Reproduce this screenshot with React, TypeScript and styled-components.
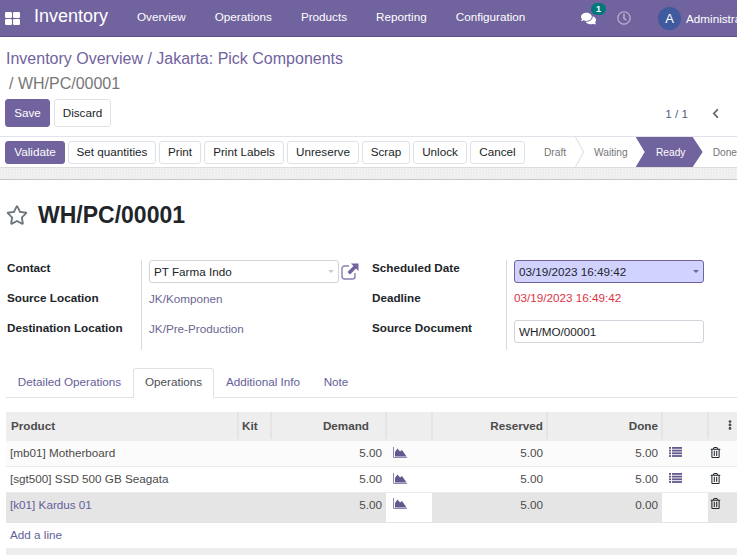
import React from "react";
import styled, { createGlobalStyle } from "styled-components";
import { FaComments, FaRegClock, FaChevronLeft, FaRegStar, FaRegTrashAlt, FaEllipsisV } from "react-icons/fa";

const Global = createGlobalStyle`
  html, body { margin: 0; padding: 0; background: #fff; overflow: hidden; }
  body { width: 737px; height: 559px; font-family: "Liberation Sans", Arial, sans-serif; font-size: 11.7px; color: #4c4c4c; }
  * { box-sizing: border-box; }
`;
const Page = styled.div`width: 737px; height: 559px; overflow: hidden; display: flex; flex-direction: column;`;
const Navbar = styled.header`
  height: 37px; flex: none; background: #71639e; border-bottom: 1px solid #5d4f8a; color: #fff;
  display: flex; align-items: center; padding-left: 5px; white-space: nowrap;
  & svg { flex: none; }
`;
const Brand = styled.span`font-size: 18px; margin-left: 14px; margin-right: 29px; width: 74px; flex: none; padding-bottom: 3px;`;
const Menu = styled.nav`display: flex; gap: 29px; flex: none; width: 387px; padding-bottom: 3px;`;
const Tray = styled.div`display: flex; align-items: center; margin-left: 57px; flex: none;`;
const ChatWrap = styled.span`position: relative; display: flex; width: 36px;`;
const Badge = styled.span`
  position: absolute; left: 10px; top: -8px; width: 15px; height: 12px; border-radius: 6px; background: #00787c;
  color: #fff; font-size: 9px; font-weight: 700; display: flex; align-items: center; justify-content: center;
`;
const ClockWrap = styled.span`display: flex; width: 41px; color: #b5adcd;`;
const Avatar = styled.span`
  width: 23px; height: 23px; border-radius: 50%; background: #3f5b9e; color: #fff; font-size: 13px;
  display: flex; align-items: center; justify-content: center; margin-right: 5px;
`;
const ControlPanel = styled.section`flex: none; height: 99px; padding: 9px 5px 0; position: relative; display: flex; flex-direction: column;`;
const Crumbs = styled.div`font-size: 16px; line-height: 25px; color: #71639e; padding-left: 1px;`;
const CrumbTail = styled.div`font-size: 16px; line-height: 25px; color: #777; padding-left: 4px;`;
const ActionRow = styled.div`display: flex; gap: 4px; align-items: center; margin-top: 3px;`;
const Btn = styled.button<{ $primary?: boolean; $h?: number; $w: number }>`
  height: ${p => p.$h ?? 28}px; width: ${p => p.$w}px; padding: 0 0 1px; font: 11.7px "Liberation Sans", Arial, sans-serif; border-radius: 3px; white-space: nowrap; flex: none;
  background: ${p => (p.$primary ? "#71639e" : "#fff")}; color: ${p => (p.$primary ? "#fff" : "#212529")};
  border: 1px solid ${p => (p.$primary ? "#71639e" : "#dee2e6")};
`;
const Pager = styled.div`margin-left: auto; display: flex; align-items: center; color: #556080; font-size: 11.7px; padding-right: 11px; gap: 22px;`;
const Chevron = styled.span`display: flex; color: #666;`;
const Statusbar = styled.section`
  flex: none; height: 32px; border-top: 1px solid #e2e2ea; border-bottom: 1px solid #dcdcdc;
  display: flex; align-items: center; padding-left: 5px; white-space: nowrap; overflow: hidden;
`;
const ActionButtons = styled.div`display: flex; gap: 3px; align-items: center; flex: none;`;
const Steps = styled.div`display: flex; align-items: center; height: 30px; padding-left: 19px; font-size: 10.2px; color: #777; flex: none;`;
const Sep = styled.svg`width: 9px; height: 30px; margin: 0 10px 0 9px; flex: none;`;
const StepGap = styled.span`width: 8px; flex: none;`;
const ReadyStep = styled.span`
  height: 30px; width: 67px; background: #71639e; color: #fff; display: flex; align-items: center; justify-content: center; padding-left: 3px;
  clip-path: polygon(0 0, 57px 0, 67px 50%, 57px 100%, 0 100%, 9px 50%);
  margin-right: 10px;
`;
const Texture = styled.div`
  flex: none; height: 12px; border-bottom: 1px solid #c9c9c9;
  background-color: #efefef;
  background-image: repeating-conic-gradient(#f2f2f2 0 25%, #ebebeb 0 50%); background-size: 3px 3px;
`;
const Sheet = styled.main`flex: 1; display: flex; flex-direction: column; min-height: 0;`;
const TitleRow = styled.div`display: flex; align-items: center; height: 34px; margin-top: 18px; padding-left: 6px; gap: 10px;`;
const Title = styled.h1`margin: 0; font-size: 23px; font-weight: 700; color: #212529;`;
const FormGrid = styled.div`display: flex; margin-top: 28px; height: 90px; padding-left: 7px;`;
const Labels = styled.div<{ $w: number }>`width: ${p => p.$w}px; flex: none; display: flex; flex-direction: column; border-right: 1px solid #d9d9d9;`;
const Label = styled.div`height: 30px; line-height: 15px; font-weight: 700; color: #212529;`;
const Values = styled.div<{ $w: number }>`width: ${p => p.$w}px; flex: none; padding-left: 7px; display: flex; flex-direction: column;`;
const ValueRow = styled.div`height: 30px; display: flex; align-items: flex-start; gap: 2px;`;
const InputBox = styled.div<{ $focus?: boolean; $w: number }>`
  width: ${p => p.$w}px; height: 23px; border-radius: 3px; padding: 0 4px 1px; display: flex; align-items: center; justify-content: space-between; flex: none;
  color: #212529; border: 1px solid ${p => (p.$focus ? "#71639e" : "#ced4da")}; background: ${p => (p.$focus ? "#d2d2ff" : "#fff")};
`;
const Caret = styled.span<{ $c: string }>`width: 0; height: 0; border: 3px solid transparent; border-top: 3px solid ${p => p.$c}; border-bottom: 0;`;
const LinkText = styled.span`color: #6b6691; line-height: 18px;`;
const RedText = styled.span`color: #dc3545; line-height: 16px;`;
const Tabs = styled.nav`display: flex; margin: 18px 0 0 6px; height: 30px; border-bottom: 1px solid #dee2e6; flex: none;`;
const Tab = styled.span<{ $active?: boolean; $w: number }>`
  width: ${p => p.$w}px; height: 30px; padding-bottom: 3px; display: flex; align-items: center; justify-content: center;
  color: ${p => (p.$active ? "#495057" : "#64609a")};
  ${p => p.$active && "border: 1px solid #dee2e6; border-bottom-color: #fff; border-radius: 3px 3px 0 0; background: #fff;"}
`;
const Table = styled.table`width: 731px; margin: 14px 0 0 6px; border-collapse: collapse; table-layout: fixed; flex: none;`;
const Th = styled.th<{ $right?: boolean; $pr?: number }>`
  height: 28px; background: #eee; font-weight: 700; color: #4c4c4c; padding: 0 ${p => p.$pr ?? 3}px 1px 3px; text-align: ${p => (p.$right ? "right" : "left")};
  border-left: 2px solid #e4e4e4; border-bottom: 2px solid #eee;
  &:first-child { border-left: 0; padding-left: 5px; }
`;
const Tr = styled.tr<{ $odd?: boolean; $sel?: boolean }>`
  height: ${p => (p.$sel ? 30 : 26)}px; vertical-align: ${p => (p.$sel ? "top" : "middle")};
  background: ${p => (p.$sel ? "#e5e5e5" : p.$odd ? "#fbfbfb" : "#fff")}; border-bottom: 1px solid ${p => (p.$sel ? "#e5e5e5" : "#ebebeb")};
`;
const Td = styled.td<{ $right?: boolean; $white?: boolean; $link?: boolean; $sel?: boolean }>`
  padding: ${p => (p.$sel ? "5px 4px 0" : "0 4px 2px")}; white-space: nowrap; color: ${p => (p.$link ? "#64609a" : "#4c4c4c")};
  text-align: ${p => (p.$right ? "right" : "left")};
  ${p => p.$white && "background: #fff;"}
`;
const DrawnIcon = styled.svg`display: block; margin-left: 3px;`;
const TrashCell = styled(FaRegTrashAlt)`color: #212529; font-size: 11px; display: block; margin-left: -2px;`;
const AddLine = styled.div`height: 25px; margin-left: 6px; padding: 0 0 2px 4px; display: flex; align-items: center; color: #64609a; flex: none;`;
const Footer = styled.div`height: 7px; margin-left: 6px; background: #eee; flex: none;`;

const AppsIcon = () => (
  <svg width="15" height="13" viewBox="0 0 15 13" fill="#fff">
    <rect x="0" y="0" width="7" height="6" rx="1.2" /><rect x="8" y="0" width="7" height="6" rx="1.2" />
    <rect x="0" y="7" width="7" height="6" rx="1.2" /><rect x="8" y="7" width="7" height="6" rx="1.2" />
  </svg>
);
const ExternalIcon = () => (
  <svg width="18" height="17" viewBox="0 0 18 17" style={{ flex: "none", marginTop: 3 }}>
    <path d="M8 3H3.5A2.5 2.5 0 0 0 1 5.500V13.500A2.500 2.500 0 0 0 3.500 16H11.500A2.500 2.500 0 0 0 14 13.500V10" fill="none" stroke="#8a7fb0" strokeWidth="1.400" />
    <path d="M10 0.500H17.500V8L15 5.500L9 11.500L6.500 9L12.500 3Z" fill="#71639e" />
  </svg>
);
const ChartIcon = () => (
  <DrawnIcon width="14" height="11" viewBox="0 0 14 11">
    <path d="M0.500 0V10.500H14" fill="none" stroke="#8f86b5" />
    <path d="M2 9.500V5L4.500 1.500L7 4.500L9 3L13.500 9.500Z" fill="#64578e" />
  </DrawnIcon>
);
const ListIcon = () => (
  <DrawnIcon width="13" height="10" viewBox="0 0 13 10" fill="#64578e">
    {[0, 2.700, 5.400, 8.100].map(y => (
      <g key={y}><rect x="0" y={y} width="2" height="1.800" /><rect x="3" y={y} width="10" height="1.800" /></g>
    ))}
  </DrawnIcon>
);

const rows = [
  { name: "[mb01] Motherboard", done: "5.00", odd: true },
  { name: "[sgt500] SSD 500 GB Seagata", done: "5.00" },
  { name: "[k01] Kardus 01", done: "0.00", sel: true },
];

export default function App() {
  return (
    <Page>
      <Global />
      <Navbar>
        <AppsIcon />
        <Brand>Inventory</Brand>
        <Menu>
          <span>Overview</span><span>Operations</span><span>Products</span><span>Reporting</span><span>Configuration</span>
        </Menu>
        <Tray>
          <ChatWrap><FaComments size={15} /><Badge>1</Badge></ChatWrap>
          <ClockWrap><FaRegClock size={14} /></ClockWrap>
          <Avatar>A</Avatar>
          <span>Administrator</span>
        </Tray>
      </Navbar>
      <ControlPanel>
        <Crumbs>Inventory Overview / Jakarta: Pick Components</Crumbs>
        <CrumbTail>/ WH/PC/00001</CrumbTail>
        <ActionRow>
          <Btn $primary $w={45}>Save</Btn>
          <Btn $w={57}>Discard</Btn>
          <Pager>1 / 1<Chevron><FaChevronLeft size={11} /></Chevron></Pager>
        </ActionRow>
      </ControlPanel>
      <Statusbar>
        <ActionButtons>
          <Btn $primary $h={23} $w={60}>Validate</Btn>
          <Btn $h={23} $w={88}>Set quantities</Btn>
          <Btn $h={23} $w={42}>Print</Btn>
          <Btn $h={23} $w={80}>Print Labels</Btn>
          <Btn $h={23} $w={72}>Unreserve</Btn>
          <Btn $h={23} $w={48}>Scrap</Btn>
          <Btn $h={23} $w={54}>Unlock</Btn>
          <Btn $h={23} $w={55}>Cancel</Btn>
        </ActionButtons>
        <Steps>
          <span>Draft</span>
          <Sep viewBox="0 0 9 30"><path d="M0.500 0 L8.500 15 L0.500 30" fill="none" stroke="#dcdcdc" /></Sep>
          <span>Waiting</span>
          <StepGap />
          <ReadyStep>Ready</ReadyStep>
          <span>Done</span>
        </Steps>
      </Statusbar>
      <Texture />
      <Sheet>
        <TitleRow>
          <FaRegStar size={22} color="#6c757d" />
          <Title>WH/PC/00001</Title>
        </TitleRow>
        <FormGrid>
          <Labels $w={135}>
            <Label>Contact</Label>
            <Label>Source Location</Label>
            <Label>Destination Location</Label>
          </Labels>
          <Values $w={230}>
            <ValueRow>
              <InputBox $w={190}>PT Farma Indo<Caret $c="#ccc" /></InputBox>
              <ExternalIcon />
            </ValueRow>
            <ValueRow><LinkText>JK/Komponen</LinkText></ValueRow>
            <ValueRow><LinkText>JK/Pre-Production</LinkText></ValueRow>
          </Values>
          <Labels $w={135}>
            <Label>Scheduled Date</Label>
            <Label>Deadline</Label>
            <Label>Source Document</Label>
          </Labels>
          <Values $w={200}>
            <ValueRow><InputBox $w={190} $focus>03/19/2023 16:49:42<Caret $c="#71639e" /></InputBox></ValueRow>
            <ValueRow><RedText>03/19/2023 16:49:42</RedText></ValueRow>
            <ValueRow><InputBox $w={190}>WH/MO/00001</InputBox></ValueRow>
          </Values>
        </FormGrid>
        <Tabs>
          <Tab $w={127}>Detailed Operations</Tab>
          <Tab $w={81} $active>Operations</Tab>
          <Tab $w={98}>Additional Info</Tab>
          <Tab $w={48}>Note</Tab>
        </Tabs>
        <Table>
          <colgroup>
            <col width={232} /><col width={33} /><col width={115} /><col width={46} /><col width={115} /><col width={115} /><col width={46} /><col width={29} />
          </colgroup>
          <thead>
            <tr>
              <Th>Product</Th><Th>Kit</Th><Th $right $pr={16}>Demand</Th><Th /><Th $right>Reserved</Th><Th $right>Done</Th><Th />
              <Th $right $pr={2}><FaEllipsisV size={10} style={{ display: "block", marginLeft: "auto" }} /></Th>
            </tr>
          </thead>
          <tbody>
            {rows.map(r => (
              <Tr key={r.name} $odd={r.odd} $sel={r.sel}>
                <Td $link={r.sel} $sel={r.sel}>{r.name}</Td>
                <Td $sel={r.sel} />
                <Td $right $sel={r.sel}>5.00</Td>
                <Td $white={r.sel} $sel={r.sel}><ChartIcon /></Td>
                <Td $right $sel={r.sel}>5.00</Td>
                <Td $right $sel={r.sel}>{r.done}</Td>
                <Td $white={r.sel} $sel={r.sel}>{!r.sel && <ListIcon />}</Td>
                <Td $sel={r.sel}><TrashCell /></Td>
              </Tr>
            ))}
          </tbody>
        </Table>
        <AddLine>Add a line</AddLine>
        <Footer />
      </Sheet>
    </Page>
  );
}
